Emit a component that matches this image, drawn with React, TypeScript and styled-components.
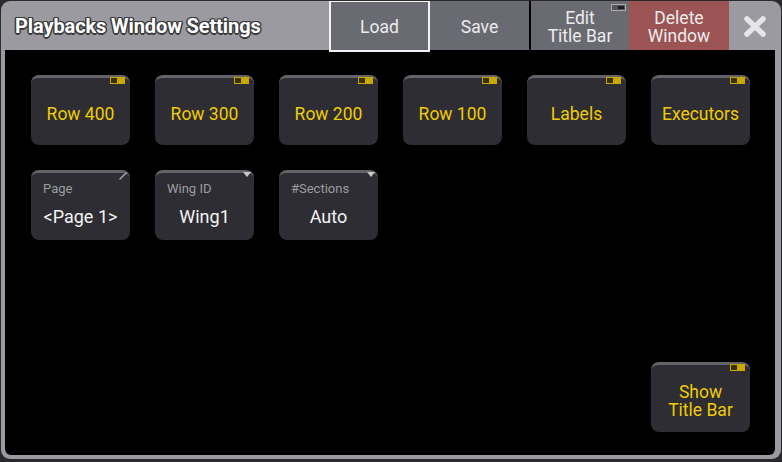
import React from "react";
import styled, { createGlobalStyle } from "styled-components";

const Global = createGlobalStyle`
  html, body { margin: 0; padding: 0; background: #2a2a2c; }
  body { width: 782px; height: 462px; overflow: hidden; font-family: Roboto, "Liberation Sans", sans-serif; }
`;

const Window = styled.div`
  margin: 1px 0 0 1px;
  width: 780px;
  height: 458px;
  background: #9a9aa0;
  border-radius: 9px;
  display: flex;
  flex-direction: column;
  overflow: hidden;
  box-sizing: border-box;
  padding: 0 6px 4px 4px;
`;

const TitleBar = styled.div`
  height: 49px;
  display: flex;
  align-items: stretch;
  margin: 0 -6px 0 -4px;
`;

const Title = styled.div`
  flex: 1;
  display: flex;
  align-items: center;
  padding: 0 0 0 14px;
  font-size: 20px;
  font-weight: 700;
  color: #ffffff;
  letter-spacing: -0.1px;
  text-shadow:
    -1px -1px 0 #3a3a3c, 1px -1px 0 #3a3a3c, -1px 1px 0 #3a3a3c, 1px 1px 0 #3a3a3c,
    0 -1.5px 0 #3a3a3c, 0 1.5px 0 #3a3a3c, -1.5px 0 0 #3a3a3c, 1.5px 0 0 #3a3a3c;
`;

const HeadButton = styled.div<{ $w: number; $bg?: string; $selected?: boolean }>`
  position: relative;
  width: ${(p) => p.$w}px;
  box-sizing: border-box;
  background: ${(p) => p.$bg || "#6a6a72"};
  border: ${(p) => (p.$selected ? "2px solid #f2f2f2" : "none")};
  color: #ececec;
  font-size: 17.5px;
  line-height: 18px;
  display: flex;
  align-items: center;
  justify-content: center;
  text-align: center;
  padding-top: ${(p) => (p.$selected ? "1px" : "3px")};
  margin-top: ${(p) => (p.$selected ? "-1px" : "0")};
  margin-bottom: ${(p) => (p.$selected ? "-2px" : "0")};
  z-index: ${(p) => (p.$selected ? 1 : 0)};
`;

const Separator = styled.div`
  width: 2px;
  background: #000;
`;

const CloseArea = styled.div`
  flex: 0 0 52px;
  display: flex;
  align-items: center;
  justify-content: center;
  padding-top: 2px;
`;

const HeadToggle = styled.div`
  position: absolute;
  top: 3px;
  right: 3px;
  width: 15px;
  height: 7px;
  box-sizing: border-box;
  border: 1px solid #a8a8ae;
  background: #55555b;
  display: flex;
  justify-content: flex-end;
  padding: 1px;
  &::after {
    content: "";
    width: 6px;
    height: 3px;
    background: #1e1e22;
  }
`;

const Content = styled.div`
  flex: 1;
  background: #000;
  border-radius: 0 0 6px 6px;
  display: flex;
  flex-direction: column;
  padding: 25px 25px 23px 26px;
`;

const Grid = styled.div`
  display: grid;
  grid-template-columns: repeat(6, 99px);
  grid-auto-rows: 70px;
  column-gap: 25px;
  row-gap: 25px;
`;

const Tile = styled.div`
  position: relative;
  box-sizing: border-box;
  background: #2d2d33;
  border-top: 3px solid #636368;
  border-radius: 8px;
  display: flex;
  flex-direction: column;
  align-items: center;
  justify-content: center;
  text-align: center;
  width: 99px;
  height: 70px;
`;

const ToggleTile = styled(Tile)`
  color: #f0cc00;
  font-size: 17.5px;
  line-height: 18px;
  padding-top: 4px;
`;

const Toggle = styled.div`
  position: absolute;
  top: -1px;
  right: 5px;
  width: 15px;
  height: 7px;
  box-sizing: border-box;
  background: #c9a800;
  padding: 1px;
  display: flex;
  &::before {
    content: "";
    width: 6px;
    height: 5px;
    background: #3a3100;
  }
`;

const FieldTile = styled(Tile)`
  align-items: stretch;
  justify-content: flex-start;
  padding: 8px 0 0 12px;
`;

const FieldLabel = styled.div`
  font-size: 13px;
  color: #9c9ca2;
  text-align: left;
  line-height: 15px;
`;

const FieldValue = styled.div`
  font-size: 18px;
  color: #f4f4f4;
  margin: 11px 0 0 -12px;
  text-align: center;
  line-height: 20px;
`;

const Corner = styled.svg`
  position: absolute;
  top: -2px;
  right: 2px;
`;

const Spacer = styled.div`
  flex: 1;
`;

const BottomRow = styled.div`
  display: flex;
  justify-content: flex-end;
`;

const Tri = () => (
  <Corner width="10" height="8" viewBox="0 0 10 8">
    <polygon points="1,1 9,1 5,6" fill="#c8c8cc" />
  </Corner>
);

const Pencil = () => (
  <Corner width="10" height="10" viewBox="0 0 10 10">
    <line x1="2" y1="8" x2="8" y2="2" stroke="#a0a0a4" strokeWidth="1.6" strokeLinecap="round" />
  </Corner>
);

const toggles = ["Row 400", "Row 300", "Row 200", "Row 100", "Labels", "Executors"];

export default function App() {
  return (
    <>
      <Global />
      <Window>
        <TitleBar>
          <Title>Playbacks Window Settings</Title>
          <HeadButton $w={101} $selected>Load</HeadButton>
          <HeadButton $w={99}>Save</HeadButton>
          <Separator />
          <HeadButton $w={98}>
            Edit
            <br />
            Title Bar
            <HeadToggle />
          </HeadButton>
          <HeadButton $w={100} $bg="#9b5353">
            Delete
            <br />
            Window
          </HeadButton>
          <CloseArea>
            <svg width="24" height="21" viewBox="0 0 24 21">
              <path d="M4 3 L20 18 M20 3 L4 18" stroke="#e6e6e8" strokeWidth="5.5" strokeLinecap="round" />
            </svg>
          </CloseArea>
        </TitleBar>
        <Content>
          <Grid>
            {toggles.map((t) => (
              <ToggleTile key={t}>
                {t}
                <Toggle />
              </ToggleTile>
            ))}
            <FieldTile>
              <FieldLabel>Page</FieldLabel>
              <FieldValue>&lt;Page 1&gt;</FieldValue>
              <Pencil />
            </FieldTile>
            <FieldTile>
              <FieldLabel>Wing ID</FieldLabel>
              <FieldValue>Wing1</FieldValue>
              <Tri />
            </FieldTile>
            <FieldTile>
              <FieldLabel>#Sections</FieldLabel>
              <FieldValue>Auto</FieldValue>
              <Tri />
            </FieldTile>
          </Grid>
          <Spacer />
          <BottomRow>
            <ToggleTile>
              Show
              <br />
              Title Bar
              <Toggle />
            </ToggleTile>
          </BottomRow>
        </Content>
      </Window>
    </>
  );
}
